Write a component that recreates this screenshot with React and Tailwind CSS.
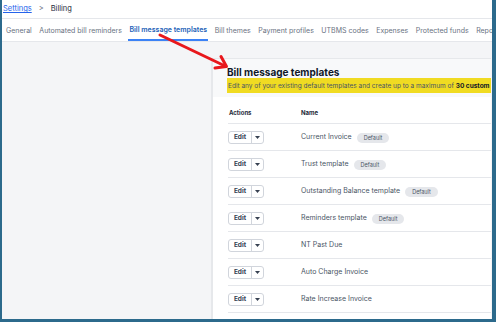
import React from "react";

const rows = [
  { name: "Current Invoice", def: true },
  { name: "Trust template", def: true },
  { name: "Outstanding Balance template", def: true },
  { name: "Reminders template", def: true },
  { name: "NT Past Due", def: false },
  { name: "Auto Charge Invoice", def: false },
  { name: "Rate Increase Invoice", def: false },
  { name: "Late Notice", def: false },
];

const tabs = [
  "General",
  "Automated bill reminders",
  "Bill message templates",
  "Bill themes",
  "Payment profiles",
  "UTBMS codes",
  "Expenses",
  "Protected funds",
  "Reports",
];

function EditButton() {
  return (
    <div className="flex h-[13px] items-stretch rounded-[3px] border border-gray-300 bg-white">
      <div className="flex w-[22px] items-center justify-center text-[6.5px] font-bold text-gray-700">Edit</div>
      <div className="flex w-[12px] items-center justify-center border-l border-gray-300">
        <svg width="5" height="3" viewBox="0 0 5 3"><path d="M0 0h5L2.5 3z" fill="#374151" /></svg>
      </div>
    </div>
  );
}

export default function App() {
  return (
    <div
      className="relative h-[322px] w-[496px] overflow-hidden border-b-[3px] border-l-2 border-r-[4px] border-[#2c6a8c] bg-white"
      style={{ fontFamily: "Inter, 'Noto Sans', sans-serif" }}
    >
      <div className="flex h-[19px] items-center gap-[7px] border-b border-gray-200 pl-[1px] text-[7.5px]">
        <span className="text-[#2563eb] underline">Settings</span>
        <span className="text-gray-500">&gt;</span>
        <span className="text-gray-800">Billing</span>
      </div>
      <div className="flex h-[23px] items-stretch gap-[5.5px] border-b border-gray-200 pl-[3px] text-[7px] text-gray-500 whitespace-nowrap">
        {tabs.map((t, i) => (
          <div
            key={t}
            className={
              i === 2
                ? "flex items-center border-b-2 border-[#3b82f6] px-[1px] pt-[2px] font-semibold text-[#1d5fb8]"
                : "flex items-center px-[1px] pt-[2px]"
            }
          >
            {t}
          </div>
        ))}
      </div>
      <div className="h-full bg-[#f4f5f7] pl-[209px] pt-[16px]">
        <div className="w-[280px] overflow-hidden border-l-2 border-t border-[#e6e8eb] bg-white">
          <div className="bg-[#f8f9fa] pb-[4px] pl-[14px] pt-[7px]">
            <div className="text-[10px] font-bold leading-[12px] text-gray-900">Bill message templates</div>
            <div className="whitespace-nowrap bg-[#f0db22] py-[3.5px] pl-[1px] text-[6.5px] leading-[8px] text-gray-600">
              Edit any of your existing default templates and create up to a maximum of <b className="text-gray-900">30 custom</b> templates
            </div>
          </div>
          <div className="pl-[15px]">
            <div className="flex h-[27px] items-center border-b border-gray-200 pt-[5px] text-[6px] font-bold text-gray-800">
              <div className="w-[73px] pl-[1px]">Actions</div>
              <div>Name</div>
            </div>
            {rows.map((r) => (
              <div key={r.name} className="flex h-[27px] items-center border-b border-gray-200 pt-[1px]">
                <div className="flex w-[73px] items-center">
                  <EditButton />
                </div>
                <div className="flex items-center gap-[5px] text-[7px] text-gray-600">
                  <span>{r.name}</span>
                  {r.def && (
                    <span className="rounded-full bg-[#e5e7eb] px-[7px] py-[2px] text-[5.5px] leading-[6px] text-gray-600">Default</span>
                  )}
                </div>
              </div>
            ))}
          </div>
        </div>
      </div>
      <svg className="pointer-events-none absolute left-0 top-0" width="496" height="322">
        <line x1="158" y1="35" x2="222" y2="65.5" stroke="#e8171c" strokeWidth="3" strokeLinecap="round" />
        <polyline points="213,68 224.5,66.5 219,56.5" fill="none" stroke="#e8171c" strokeWidth="3" strokeLinecap="round" strokeLinejoin="round" />
      </svg>
    </div>
  );
}
